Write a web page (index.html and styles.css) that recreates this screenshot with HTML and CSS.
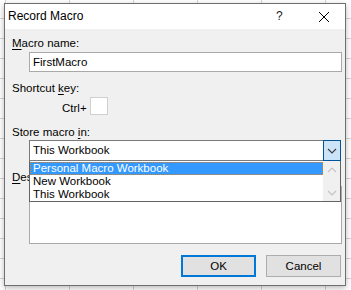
FILE: index.html
```html
<!DOCTYPE html>
<html>
<head>
<meta charset="utf-8">
<link rel="stylesheet" href="styles.css">
</head>
<body>
<div class="dialog">
  <div class="titlebar">
    <span class="title">Record Macro</span>
    <span class="help">?</span>
    <span class="close">
      <svg width="12" height="12" viewBox="0 0 12 12"><path d="M1 1 L11 11 M11 1 L1 11" stroke="#000" stroke-width="1" fill="none"/></svg>
    </span>
  </div>
  <div class="content">
    <div class="label l-name"><u>M</u>acro name:</div>
    <div class="textbox name-box">FirstMacro</div>
    <div class="label l-short">Shortcut <u>k</u>ey:</div>
    <div class="ctrl-row"><span class="ctrl">Ctrl+</span><span class="keybox"></span></div>
    <div class="label l-store">Store macro <u>i</u>n:</div>
    <div class="combo-wrap">
      <div class="combo">
        <span class="combo-text">This Workbook</span>
        <span class="combo-btn">
          <svg width="10" height="6" viewBox="0 0 10 6"><path d="M1 1 L5 5 L9 1" stroke="#3c3c3c" stroke-width="1.1" fill="none"/></svg>
        </span>
      </div>
      <div class="droplist">
        <div class="items">
          <div class="item selected">Personal Macro Workbook</div>
          <div class="item">New Workbook</div>
          <div class="item">This Workbook</div>
        </div>
        <div class="scrollbar">
          <svg width="10" height="6" viewBox="0 0 10 6"><path d="M1 5 L5 1 L9 5" stroke="#c4c4c4" stroke-width="1.2" fill="none"/></svg>
          <svg width="10" height="6" viewBox="0 0 10 6"><path d="M1 1 L5 5 L9 1" stroke="#c4c4c4" stroke-width="1.2" fill="none"/></svg>
        </div>
      </div>
    </div>
    <div class="label l-desc"><u>D</u>escription:</div>
    <div class="textarea"></div>
    <div class="buttons">
      <div class="btn ok">OK</div>
      <div class="btn">Cancel</div>
    </div>
  </div>
</div>
</body>
</html>
```

FILE: styles.css
```css
html, body {
  margin: 0;
  padding: 0;
}
body {
  width: 351px;
  height: 290px;
  overflow: hidden;
  background-color: #ffffff;
  background-image:
    repeating-linear-gradient(to right, transparent 0, transparent 5px, #d4d4d4 5px, #d4d4d4 6px, transparent 6px, transparent 64px),
    repeating-linear-gradient(to bottom, transparent 0, transparent 18px, #d4d4d4 18px, #d4d4d4 19px, transparent 19px, transparent 20px);
  background-size: 64px 100%, 100% 20px;
  background-position: 0 0, 0 0;
  font-family: "Liberation Sans", Arial, sans-serif;
  font-size: 11.5px;
  color: #000;
  padding-top: 3px;
  padding-left: 4px;
  box-sizing: border-box;
}
.dialog {
  width: 342px;
  height: 283px;
  box-sizing: border-box;
  border: 1px solid #6f6f6f;
  background: #f0f0f0;
  box-shadow: 0 2px 6px rgba(0,0,0,0.28);
  display: flex;
  flex-direction: column;
}
.titlebar {
  height: 25px;
  background: #ffffff;
  display: flex;
  align-items: center;
  flex-shrink: 0;
}
.title {
  font-size: 12px;
  line-height: 25px;
  padding-left: 3px;
  flex: 1;
}
.help {
  font-size: 12px;
  line-height: 25px;
  width: 12px;
  margin-right: 30px;
  color: #222;
}
.close {
  width: 12px;
  height: 12px;
  margin-right: 15px;
  display: flex;
}
.content {
  padding: 0 3px 0 7px;
  flex: 1;
  display: flex;
  flex-direction: column;
}
.label {
  line-height: 14px;
  height: 14px;
  white-space: nowrap;
}
.label u {
  text-underline-offset: 2px;
}
.l-name { margin-top: 7px; }
.l-short { margin-top: 9px; }
.l-store { margin-top: 10px; }
.l-desc {
  margin-top: 9px;
  width: 17px;
  height: 16px;
  overflow: hidden;
}
.textbox {
  margin-top: 2px;
  margin-left: 17px;
  height: 20px;
  box-sizing: border-box;
  border: 1px solid #a9a9a9;
  background: #fff;
  line-height: 18px;
  padding-left: 3px;
}
.ctrl-row {
  margin-top: 2px;
  margin-left: 50px;
  display: flex;
  align-items: flex-end;
  height: 18px;
}
.ctrl {
  line-height: 14px;
  width: 28px;
}
.keybox {
  width: 18px;
  height: 18px;
  box-sizing: border-box;
  background: #fff;
  border: 1px solid #d0d0d0;
}
.combo-wrap {
  margin-top: 1px;
  margin-left: 17px;
  position: relative;
  width: 312px;
}
.combo {
  height: 21px;
  box-sizing: border-box;
  border: 1px solid #7a7a7a;
  border-right: none;
  background: #fff;
  display: flex;
}
.combo-text {
  flex: 1;
  line-height: 19px;
  padding-left: 3px;
}
.combo-btn {
  width: 18px;
  height: 21px;
  margin-top: -1px;
  box-sizing: border-box;
  border: 1px solid #005499;
  background: #cce4f7;
  display: flex;
  align-items: center;
  justify-content: center;
}
.droplist {
  position: absolute;
  top: 21px;
  left: 0;
  width: 312px;
  height: 41px;
  box-sizing: border-box;
  border: 1px solid #646464;
  border-top: none;
  background: #fff;
  display: flex;
  z-index: 2;
}
.items {
  flex: 1;
  padding-top: 1px;
}
.item {
  height: 13px;
  line-height: 13px;
  padding-left: 3px;
  white-space: nowrap;
}
.item.selected {
  background: #3399ff;
  color: #fff;
  outline: 1px dotted #e2801c;
  outline-offset: -1px;
}
.scrollbar {
  width: 17px;
  background: #f0f0f0;
  display: flex;
  flex-direction: column;
  align-items: center;
  justify-content: space-between;
  padding: 6px 0 5px;
  box-sizing: border-box;
}
.textarea {
  margin-top: 0px;
  margin-left: 17px;
  height: 58px;
  box-sizing: border-box;
  border: 1px solid #a9a9a9;
  background: #fff;
}
.buttons {
  margin-top: 11px;
  display: flex;
  justify-content: flex-end;
  gap: 10px;
  padding-right: 1px;
}
.btn {
  width: 75px;
  height: 22px;
  box-sizing: border-box;
  border: 1px solid #adadad;
  background: #e1e1e1;
  text-align: center;
  line-height: 20px;
}
.btn.ok {
  border: 2px solid #0078d7;
  line-height: 18px;
}
```
